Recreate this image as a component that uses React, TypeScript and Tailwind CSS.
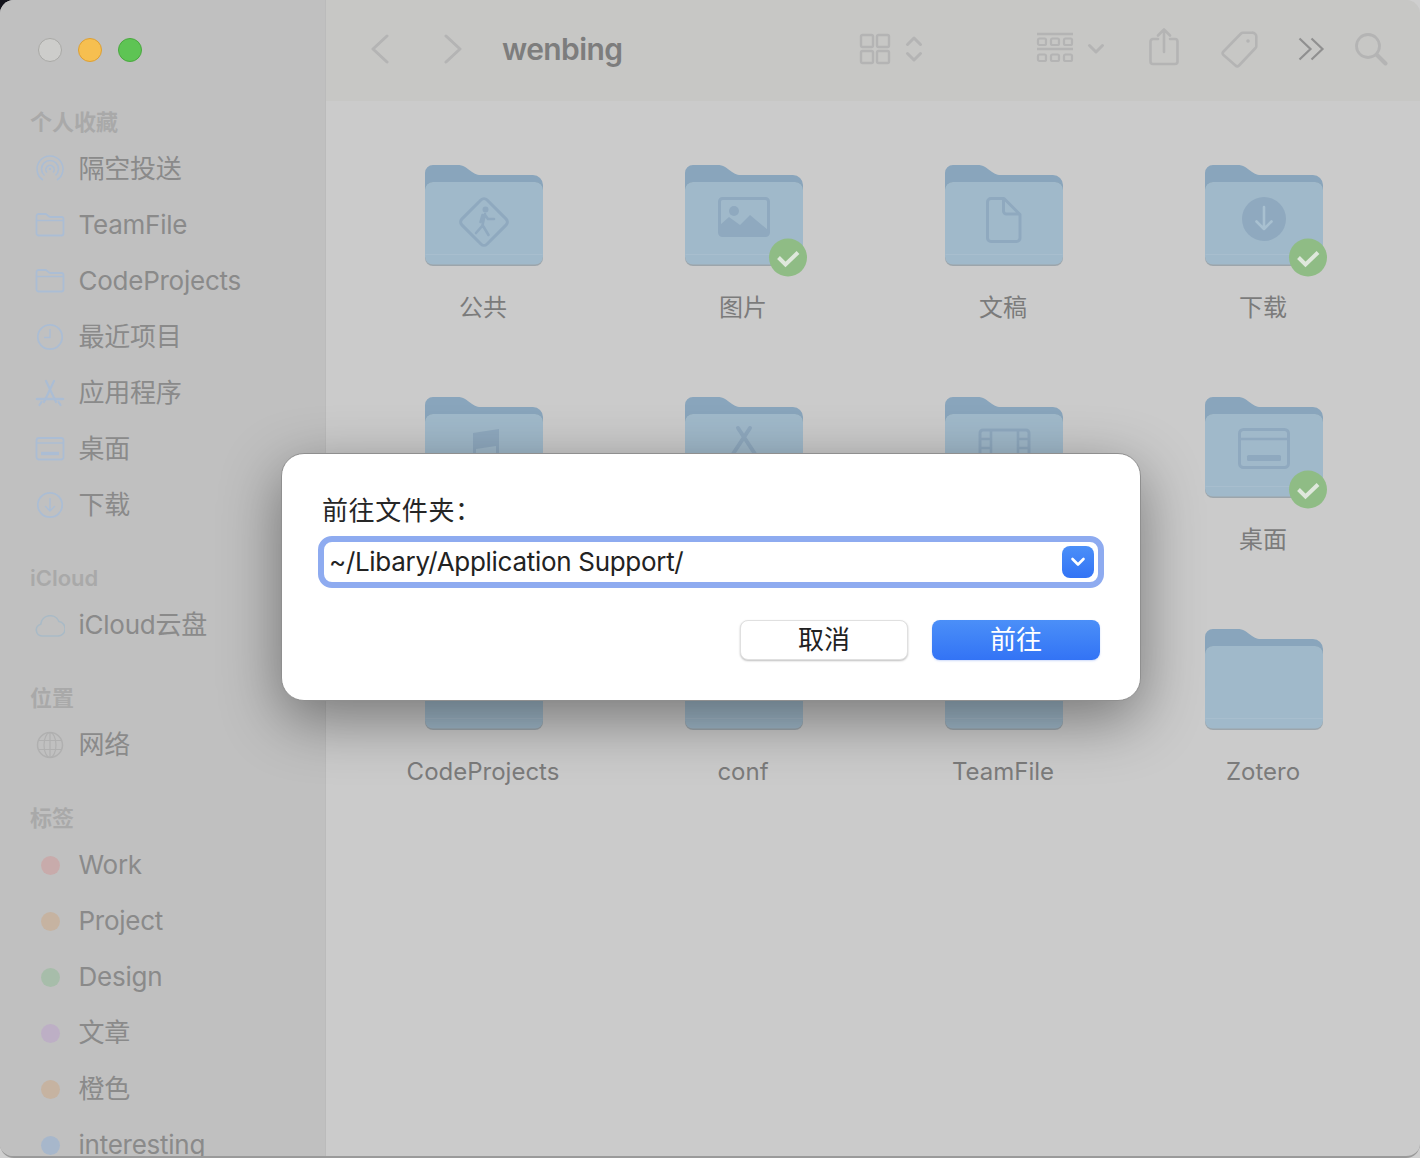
import type { ReactNode } from 'react';

const LATIN = "font-['Inter','Noto_Sans_CJK_SC',sans-serif]";

const SidebarIcon = ({ children, tone = 'text-[#abbdd4]' }: { children: ReactNode; tone?: string }) => (
  <svg viewBox="0 0 30 30" fill="none" stroke="currentColor" strokeWidth="1.8" className={`w-[30px] h-[30px] shrink-0 ${tone}`}>
    {children}
  </svg>
);

const folderGlyph = (
  <>
    <path d="M1.5 6a2 2 0 0 1 2-2h7c2 0 2.5 3 5 3h11a2 2 0 0 1 2 2v14.5a2 2 0 0 1-2 2h-23a2 2 0 0 1-2-2z" />
    <path d="M1.5 10.5h27" strokeWidth="1.4" />
  </>
);

const favorites = [
  {
    label: '隔空投送',
    icon: (
      <SidebarIcon>
        <path d="M8 26a13 13 0 1 1 14 0" strokeWidth="1.6" />
        <path d="M9.500 21.500a8.500 8.500 0 1 1 11 0" strokeWidth="1.6" />
        <path d="M12 18.500a4.200 4.200 0 1 1 6 0" strokeWidth="1.6" />
        <circle cx="15" cy="15" r="1.300" fill="currentColor" stroke="none" />
      </SidebarIcon>
    ),
  },
  { label: 'TeamFile', icon: <SidebarIcon>{folderGlyph}</SidebarIcon> },
  { label: 'CodeProjects', icon: <SidebarIcon>{folderGlyph}</SidebarIcon> },
  {
    label: '最近项目',
    icon: (
      <SidebarIcon>
        <circle cx="15" cy="15" r="12.200" />
        <path d="M15 7v8.500H9" strokeWidth="1.4" />
      </SidebarIcon>
    ),
  },
  {
    label: '应用程序',
    icon: (
      <SidebarIcon>
        <path d="M11 3l10 21M19 3L9 24" strokeWidth="2.200" strokeLinecap="round" />
        <path d="M2 21h26" strokeWidth="2.600" strokeLinecap="round" />
        <path d="M4.500 27l2-3M25.500 27l-2-3" strokeWidth="2.200" strokeLinecap="round" />
      </SidebarIcon>
    ),
  },
  {
    label: '桌面',
    icon: (
      <SidebarIcon>
        <rect x="1.500" y="4" width="27" height="21.500" rx="2.500" />
        <path d="M1.500 9h27" strokeWidth="1.4" />
        <path d="M6 19.500h18" strokeWidth="3.400" />
      </SidebarIcon>
    ),
  },
  {
    label: '下载',
    icon: (
      <SidebarIcon>
        <circle cx="15" cy="15" r="12.200" />
        <path d="M15 8.500v12M10.500 16.500l4.500 4.500 4.500-4.500" strokeWidth="1.4" strokeLinecap="round" strokeLinejoin="round" />
      </SidebarIcon>
    ),
  },
];

const cloudIcon = (
  <SidebarIcon tone="text-[#a9bac6]">
    <path d="M7 26a6 6 0 0 1-1.200-11.800A9.500 9.500 0 0 1 24 11.500 7.300 7.300 0 0 1 23 26z" strokeWidth="1.6" />
  </SidebarIcon>
);

const globeIcon = (
  <SidebarIcon tone="text-[#b0b0b0]">
    <circle cx="15" cy="15" r="12.500" strokeWidth="1.5" />
    <ellipse cx="15" cy="15" rx="6" ry="12.500" strokeWidth="1.2" />
    <path d="M3.500 10.500h23M3.500 19.500h23M15 2.500v25" strokeWidth="1.2" />
  </SidebarIcon>
);

const tags = [
  { label: 'Work', dot: 'bg-[#c8abab]' },
  { label: 'Project', dot: 'bg-[#c6b3a1]' },
  { label: 'Design', dot: 'bg-[#a7bdaa]' },
  { label: '文章', dot: 'bg-[#bdafc5]' },
  { label: '橙色', dot: 'bg-[#c6b3a1]' },
  { label: 'interesting', dot: 'bg-[#a7b7cb]' },
];

const SidebarRow = ({ icon, label }: { icon: ReactNode; label: string }) => (
  <div className="flex items-center h-[56px] pl-[35px] gap-[13.5px]">
    {icon}
    <span className="text-[26px] leading-[34px] tracking-[-0.25px] text-[#8a8a8a] whitespace-nowrap">{label}</span>
  </div>
);

const SidebarSection = ({ title, children }: { title: string; children: ReactNode }) => (
  <section className="mb-[33px]">
    <h3 className="h-[24px] mb-[7px] pl-[30px] text-[22px] leading-[24px] font-semibold text-[#a9a9a9]">{title}</h3>
    {children}
  </section>
);

const Sidebar = () => (
  <aside className={`w-[326px] h-full shrink-0 bg-[#c0c0c0] border-r border-[#bbbbbb] overflow-hidden ${LATIN}`}>
    <div className="flex items-start gap-[16px] pl-[38px] pt-[38px] h-[110px]">
      <span className="w-[24px] h-[24px] rounded-full bg-[#cdcdcb] border border-[#a9a9a6]" />
      <span className="w-[24px] h-[24px] rounded-full bg-[#f6bf50] border border-[#dc9f35]" />
      <span className="w-[24px] h-[24px] rounded-full bg-[#5ec454] border border-[#4aa83f]" />
    </div>
    <SidebarSection title="个人收藏">
      {favorites.map((item) => (
        <SidebarRow key={item.label} icon={item.icon} label={item.label} />
      ))}
    </SidebarSection>
    <SidebarSection title="iCloud">
      <SidebarRow icon={cloudIcon} label="iCloud云盘" />
    </SidebarSection>
    <SidebarSection title="位置">
      <SidebarRow icon={globeIcon} label="网络" />
    </SidebarSection>
    <SidebarSection title="标签">
      {tags.map((tag) => (
        <SidebarRow
          key={tag.label}
          label={tag.label}
          icon={
            <span className="w-[30px] h-[30px] shrink-0 flex items-center justify-center">
              <span className={`w-[19px] h-[19px] rounded-full ${tag.dot}`} />
            </span>
          }
        />
      ))}
    </SidebarSection>
  </aside>
);

const Toolbar = () => (
  <header className={`h-[101px] shrink-0 bg-[#c7c7c5] flex items-center pl-[45px] pb-[3px] text-[#b4b4b4] ${LATIN}`}>
    <svg viewBox="0 0 18 32" fill="none" stroke="currentColor" strokeWidth="3" strokeLinecap="round" strokeLinejoin="round" className="w-[18px] h-[32px] shrink-0">
      <path d="M16 3L2 16l14 13" />
    </svg>
    <svg viewBox="0 0 18 32" fill="none" stroke="currentColor" strokeWidth="3" strokeLinecap="round" strokeLinejoin="round" className="w-[18px] h-[32px] ml-[55px] shrink-0">
      <path d="M2 3l14 13L2 29" />
    </svg>
    <h1 className="w-[120px] ml-[40px] text-[30px] leading-[36px] font-semibold text-[#7d7d7d] tracking-[-0.6px] whitespace-nowrap">wenbing</h1>
    <svg viewBox="0 0 32 32" fill="none" stroke="currentColor" strokeWidth="2.400" className="w-[32px] h-[32px] ml-[237px] shrink-0">
      <rect x="2" y="2" width="12" height="12" rx="1.500" />
      <rect x="18" y="2" width="12" height="12" rx="1.500" />
      <rect x="2" y="18" width="12" height="12" rx="1.500" />
      <rect x="18" y="18" width="12" height="12" rx="1.500" />
    </svg>
    <svg viewBox="0 0 18 28" fill="none" stroke="currentColor" strokeWidth="3" strokeLinecap="round" strokeLinejoin="round" className="w-[18px] h-[28px] ml-[14px] shrink-0">
      <path d="M2.500 9.500L9 3l6.500 6.500M2.500 18.500L9 25l6.500-6.500" />
    </svg>
    <svg viewBox="0 0 38 34" fill="none" stroke="currentColor" className="w-[38px] h-[34px] ml-[113px] shrink-0">
      <path d="M1 2h36M1 17h36" strokeWidth="2.400" />
      <g strokeWidth="2.200">
        <rect x="2" y="6.500" width="8" height="6.500" rx="1.500" />
        <rect x="15" y="6.500" width="8" height="6.500" rx="1.500" />
        <rect x="28" y="6.500" width="8" height="6.500" rx="1.500" />
        <rect x="2" y="22.500" width="8" height="6.500" rx="1.500" />
        <rect x="15" y="22.500" width="8" height="6.500" rx="1.500" />
        <rect x="28" y="22.500" width="8" height="6.500" rx="1.500" />
      </g>
    </svg>
    <svg viewBox="0 0 18 12" fill="none" stroke="currentColor" strokeWidth="3" strokeLinecap="round" strokeLinejoin="round" className="w-[18px] h-[12px] ml-[13px] shrink-0">
      <path d="M2.500 2.500L9 9l6.500-6.500" />
    </svg>
    <svg viewBox="0 0 32 38" fill="none" stroke="currentColor" strokeWidth="2.600" strokeLinecap="round" strokeLinejoin="round" className="w-[32px] h-[38px] ml-[43px] shrink-0 -translate-y-[2px]">
      <path d="M10 11H5a2.500 2.500 0 0 0-2.500 2.500v20A2.500 2.500 0 0 0 5 36h22a2.500 2.500 0 0 0 2.500-2.500v-20A2.500 2.500 0 0 0 27 11h-5" />
      <path d="M16 24V1.500M10 7.500l6-6 6 6" />
    </svg>
    <svg viewBox="0 0 38 38" fill="none" stroke="currentColor" strokeWidth="2.600" strokeLinejoin="round" className="w-[38px] h-[38px] ml-[41px] shrink-0">
      <path d="M2.500 21.500L20 3.500a2.500 2.500 0 0 1 1.800-.800h9a4 4 0 0 1 4.500 4.500v9a2.500 2.500 0 0 1-.800 1.800L18 35.500a2.500 2.500 0 0 1-3.500 0L2.500 25a2.500 2.500 0 0 1 0-3.500z" />
      <circle cx="27" cy="11" r="1.800" fill="currentColor" stroke="none" />
    </svg>
    <svg viewBox="0 0 28 24" fill="none" stroke="#909090" strokeWidth="2.200" strokeLinejoin="miter" className="w-[28px] h-[24px] ml-[38px] shrink-0">
      <path d="M2.500 1.500l11 10.500-11 10.500M14.500 1.500l11 10.500-11 10.500" />
    </svg>
    <svg viewBox="0 0 34 34" fill="none" stroke="currentColor" strokeLinecap="round" className="w-[34px] h-[34px] ml-[29px] shrink-0">
      <circle cx="14" cy="14" r="11.500" strokeWidth="2.800" />
      <path d="M23 23l8.500 8.500" strokeWidth="4" />
    </svg>
  </header>
);

const INK = '#8fa9bf';

const folderArt: Record<string, ReactNode> = {
  walker: (
    <>
      <rect x="41.300" y="39.300" width="35.400" height="35.400" rx="4" transform="rotate(45 59 57)" fill="none" stroke={INK} strokeWidth="3" />
      <circle cx="60.500" cy="44.500" r="3" fill={INK} />
      <path d="M60 49l-2.500 11 6 10M58 60l-7 8M60 50l3 4h6M57.500 50l-2 7" fill="none" stroke={INK} strokeWidth="2.600" strokeLinecap="round" strokeLinejoin="round" />
    </>
  ),
  picture: (
    <>
      <rect x="34.500" y="33.500" width="49" height="37" rx="3" fill="none" stroke={INK} strokeWidth="3" />
      <circle cx="49" cy="46" r="5" fill={INK} />
      <path d="M35 70V60l9-8 11 8 10-10 18 15v5z" fill={INK} />
    </>
  ),
  doc: (
    <path d="M46 33.500h13l16 16V73a3.500 3.500 0 0 1-3.500 3.500h-25.500A3.500 3.500 0 0 1 42.500 73V37a3.500 3.500 0 0 1 3.500-3.500zM58.500 33.500V46a3 3 0 0 0 3 3H75" fill="none" stroke={INK} strokeWidth="3" strokeLinejoin="round" />
  ),
  download: (
    <>
      <circle cx="59" cy="54" r="22" fill={INK} />
      <path d="M59 42v22M51.500 56.500L59 64l7.500-7.500" fill="none" stroke="#a8c0d0" strokeWidth="2.600" strokeLinecap="round" strokeLinejoin="round" />
    </>
  ),
  music: (
    <>
      <path d="M48 36l26-4v40H48z" fill={INK} />
      <path d="M51 52l20-3v25H51z" fill="#a0b9ca" />
    </>
  ),
  app: (
    <path d="M53 31l19 29M65 31L46 60" fill="none" stroke={INK} strokeWidth="4" strokeLinecap="round" />
  ),
  film: (
    <>
      <rect x="35" y="33" width="49" height="42" rx="3" fill="none" stroke={INK} strokeWidth="3" />
      <path d="M46 33v42M73 33v42M35 42h11M35 51h11M73 42h11M73 51h11M46 60h27" fill="none" stroke={INK} strokeWidth="2.600" />
    </>
  ),
  desktop: (
    <>
      <rect x="34.500" y="32.500" width="49" height="38" rx="4" fill="none" stroke={INK} strokeWidth="3" />
      <path d="M34.500 42h49" stroke={INK} strokeWidth="2.400" />
      <rect x="42" y="58" width="34" height="6" rx="1.500" fill={INK} />
    </>
  ),
};

const Folder = ({ art, synced, label }: { art?: string; synced?: boolean; label?: string }) => (
  <div className="flex flex-col items-center h-[232px] pt-[64px]">
    <svg viewBox="0 0 128 112" className="w-[128px] h-[112px] translate-x-[6px] shrink-0 overflow-visible">
      <path
        d="M0 8a8 8 0 0 1 8-8h24c7 0 9 2.500 13 5.500 3.500 2.500 6 4.500 11 4.500h52a10 10 0 0 1 10 10v40H0z"
        fill="#89a5bc"
      />
      <rect x="0" y="17" width="118" height="84" rx="8" fill="#6e7f8c" opacity="0.5" />
      <rect x="0" y="17" width="118" height="82.500" rx="8" fill="#a0b9ca" />
      <path d="M0.500 89.500h117" stroke="#a8bece" strokeWidth="1.200" />
      {art && folderArt[art]}
      {synced && (
        <>
          <circle cx="103" cy="92.500" r="19" fill="#8fbc85" />
          <path d="M93.500 92.500l7 7 12.500-12" fill="none" stroke="#dfe8dc" strokeWidth="4" strokeLinejoin="miter" />
        </>
      )}
    </svg>
    {label && <span className="mt-[15px] text-[24px] leading-[32px] text-[#7b7b7b] whitespace-nowrap">{label}</span>}
  </div>
);

const folders = [
  { art: 'walker', label: '公共' },
  { art: 'picture', label: '图片', synced: true },
  { art: 'doc', label: '文稿' },
  { art: 'download', label: '下载', synced: true },
  { art: 'music' },
  { art: 'app' },
  { art: 'film' },
  { art: 'desktop', label: '桌面', synced: true },
  { label: 'CodeProjects' },
  { label: 'conf' },
  { label: 'TeamFile' },
  { label: 'Zotero' },
];

const GoToDialog = () => (
  <div className={`absolute left-[281px] top-[453px] w-[860px] h-[248px] bg-white rounded-[23px] border border-[#8f8f8f] shadow-[0_18px_60px_rgba(0,0,0,0.42)] pl-[40px] pt-[39px] ${LATIN}`}>
    <label className="block h-[36px] text-[26px] leading-[36px] text-[#262626] tracking-[0.6px]">前往文件夹：</label>
    <div className="mt-[7px] -ml-[4px] w-[786px] h-[52px] rounded-[14px] border-[6px] border-[#8eabf0] bg-white flex items-center pl-[5px] pr-[4px]">
      <span className="flex-1 text-[26px] leading-[36px] tracking-[-0.3px] text-[#222222] whitespace-nowrap">~/Libary/Application Support/</span>
      <span className="w-[32px] h-[32px] rounded-[8px] bg-gradient-to-b from-[#4b8ff8] to-[#3373f5] flex items-center justify-center">
        <svg viewBox="0 0 16 12" fill="none" stroke="white" strokeWidth="2.600" strokeLinecap="round" strokeLinejoin="round" className="w-[16px] h-[12px]">
          <path d="M2.500 3l5.500 5.500L13.500 3" />
        </svg>
      </span>
    </div>
    <div className="mt-[32px] flex justify-end gap-[24px] pr-[40px]">
      <button className="w-[168px] h-[40px] rounded-[8px] bg-white border border-[#e0e0e0] shadow-[0_1px_2px_rgba(0,0,0,0.25)] text-[26px] leading-[34px] text-[#222222]">取消</button>
      <button className="w-[168px] h-[40px] rounded-[8px] bg-gradient-to-b from-[#4b8ff8] to-[#3373f5] shadow-[0_1px_2px_rgba(60,110,240,0.25)] text-[26px] leading-[34px] text-white">前往</button>
    </div>
  </div>
);

export default function App() {
  return (
    <div className="relative w-[1420px] h-[1158px] bg-[linear-gradient(135deg,#14141c_2%,#cfcfcf_2%)] overflow-hidden">
      <div className="flex w-full h-full rounded-[14px] overflow-hidden bg-[#cbcbcb] border-b-2 border-[#9a9a9a]">
        <Sidebar />
        <main className={`flex-1 flex flex-col min-w-0 ${LATIN}`}>
          <Toolbar />
          <div className="grid grid-cols-[repeat(4,260px)] pl-[27px]">
            {folders.map((folder, index) => (
              <Folder key={index} {...folder} />
            ))}
          </div>
        </main>
      </div>
      <GoToDialog />
    </div>
  );
}
